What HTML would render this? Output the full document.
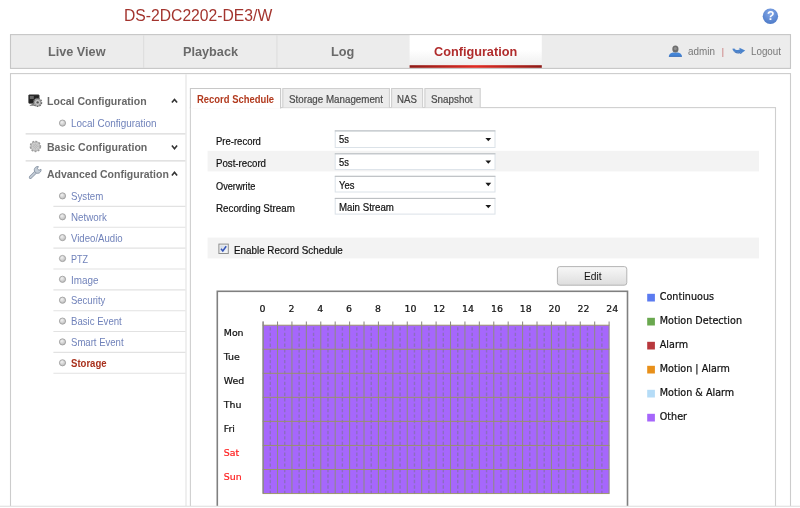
<!DOCTYPE html>
<html><head><meta charset="utf-8">
<title>Configuration</title>
<style>
*{box-sizing:border-box;margin:0;padding:0}
html,body{width:800px;height:508px;overflow:hidden;background:#fff;font-family:"Liberation Sans",Arial,sans-serif;}
.abs{position:absolute}
svg{position:absolute;overflow:visible}
.t{position:absolute;white-space:nowrap;transform-origin:0 0;line-height:14px}
</style></head><body style="filter:blur(0.4px)">

<svg style="left:0;top:0" width="800" height="508" viewBox="0 0 800 508">
<defs>
<linearGradient id="gcur" x1="0" y1="0" x2="0" y2="1"><stop offset="0.45" stop-color="#fff"/><stop offset="1" stop-color="#ededed"/></linearGradient>
<linearGradient id="gred" x1="0" y1="0" x2="1" y2="0"><stop offset="0" stop-color="#8e1a16"/><stop offset="0.5" stop-color="#e02a22"/><stop offset="1" stop-color="#8e1a16"/></linearGradient>
<radialGradient id="ghelp" cx="0.5" cy="0.3" r="0.75"><stop offset="0" stop-color="#84a8e8"/><stop offset="1" stop-color="#4a78c6"/></radialGradient>
<linearGradient id="gbtn" x1="0" y1="0" x2="0" y2="1"><stop offset="0" stop-color="#f8f8f8"/><stop offset="1" stop-color="#dddddd"/></linearGradient>
<radialGradient id="gdot" cx="0.4" cy="0.35" r="0.7"><stop offset="0" stop-color="#f2f2f2"/><stop offset="1" stop-color="#b8b8b8"/></radialGradient>
<linearGradient id="cbg" x1="0" y1="0" x2="1" y2="1"><stop offset="0" stop-color="#cfd8e4"/><stop offset="1" stop-color="#f4f7fa"/></linearGradient>
</defs>
<circle cx="770.4" cy="16.2" r="7.7" fill="url(#ghelp)"/>
<rect x="10.5" y="34.6" width="780" height="33.8" fill="#ececec" stroke="#c6c6c6" stroke-width="1.1"/>
<path d="M143.7 35.2V67.8M276.9 35.2V67.8" stroke="#dcdcdc" stroke-width="1"/>
<rect x="409.6" y="35.2" width="132.2" height="32.6" fill="url(#gcur)"/>
<rect x="409.6" y="65.2" width="132.2" height="2.6" fill="url(#gred)"/>
<rect x="10.5" y="73.6" width="780" height="445" fill="#fff" stroke="#cccccc" stroke-width="1.1"/>
<path d="M25.6 133.9H185.6M25.6 160.9H185.6" stroke="#d9d9d9" stroke-width="1.2"/>
<path d="M53.4 206.40H185.6M53.4 227.26H185.6M53.4 248.12H185.6M53.4 268.98H185.6M53.4 289.84H185.6M53.4 310.70H185.6M53.4 331.56H185.6M53.4 352.42H185.6M53.4 373.28H185.6" stroke="#e2e2e2" stroke-width="1.1"/>
<path d="M186 74.2V520" stroke="#e4e4e4" stroke-width="1.2"/>
<rect x="190.4" y="107.6" width="585.1" height="420" fill="#fff" stroke="#cfcfcf" stroke-width="1.1"/>
<path d="M190.4 108.4V88.5H280.6V108.4" fill="#fff" stroke="#c8c8c8" stroke-width="1.1"/>
<path d="M282.8 107.6V88.5H389.4V107.6" fill="#ececec" stroke="#cfcfcf" stroke-width="1.1"/>
<path d="M391.6 107.6V88.5H422.6V107.6" fill="#ececec" stroke="#cfcfcf" stroke-width="1.1"/>
<path d="M424.9 107.6V88.5H480.2V107.6" fill="#ececec" stroke="#cfcfcf" stroke-width="1.1"/>
<rect x="207.6" y="150.8" width="551.4" height="20.6" fill="#f3f3f3"/>
<rect x="207.6" y="237.6" width="551.4" height="20.8" fill="#f3f3f3"/>
<rect x="335.2" y="130.9" width="159.8" height="16.6" fill="#fff" stroke="#dbe2e8" stroke-width="1"/>
<path d="M334.8 130.9H495.4" stroke="#b9bcbf" stroke-width="1"/>
<path d="M485.4 137.9H491.2L488.3 141.2Z" fill="#1a1a1a"/>
<rect x="335.2" y="153.8" width="159.8" height="15.8" fill="#fff" stroke="#dbe2e8" stroke-width="1"/>
<path d="M334.8 153.8H495.4" stroke="#b9bcbf" stroke-width="1"/>
<path d="M485.4 160.4H491.2L488.3 163.7Z" fill="#1a1a1a"/>
<rect x="335.2" y="176.3" width="159.8" height="15.7" fill="#fff" stroke="#dbe2e8" stroke-width="1"/>
<path d="M334.8 176.3H495.4" stroke="#b9bcbf" stroke-width="1"/>
<path d="M485.4 182.8H491.2L488.3 186.2Z" fill="#1a1a1a"/>
<rect x="335.2" y="198.4" width="159.8" height="15.7" fill="#fff" stroke="#dbe2e8" stroke-width="1"/>
<path d="M334.8 198.4H495.4" stroke="#b9bcbf" stroke-width="1"/>
<path d="M485.4 204.9H491.2L488.3 208.2Z" fill="#1a1a1a"/>
<rect x="557.4" y="266.6" width="69.4" height="18.6" rx="2.5" fill="url(#gbtn)" stroke="#b4b4b4" stroke-width="1"/>
<rect x="218.9" y="244.1" width="9.4" height="9.4" fill="#f4f4f4" stroke="#8e8f8f" stroke-width="1"/>
<rect x="220.3" y="245.5" width="6.6" height="6.6" fill="url(#cbg)"/>
<path d="M221 248.8L222.8 251L226.2 246.2" fill="none" stroke="#3554b8" stroke-width="1.5"/>
<circle cx="62.5" cy="123.1" r="3.1" fill="url(#gdot)" stroke="#999" stroke-width="0.8"/>
<circle cx="62.5" cy="195.9" r="3.1" fill="url(#gdot)" stroke="#999" stroke-width="0.8"/>
<circle cx="62.5" cy="216.8" r="3.1" fill="url(#gdot)" stroke="#999" stroke-width="0.8"/>
<circle cx="62.5" cy="237.6" r="3.1" fill="url(#gdot)" stroke="#999" stroke-width="0.8"/>
<circle cx="62.5" cy="258.5" r="3.1" fill="url(#gdot)" stroke="#999" stroke-width="0.8"/>
<circle cx="62.5" cy="279.3" r="3.1" fill="url(#gdot)" stroke="#999" stroke-width="0.8"/>
<circle cx="62.5" cy="300.2" r="3.1" fill="url(#gdot)" stroke="#999" stroke-width="0.8"/>
<circle cx="62.5" cy="321.1" r="3.1" fill="url(#gdot)" stroke="#999" stroke-width="0.8"/>
<circle cx="62.5" cy="341.9" r="3.1" fill="url(#gdot)" stroke="#999" stroke-width="0.8"/>
<circle cx="62.5" cy="362.8" r="3.1" fill="url(#gdot)" stroke="#999" stroke-width="0.8"/>
<path d="M171.9 102.6L174.5 99.39999999999999L177.1 102.6" fill="none" stroke="#333" stroke-width="1.6"/>
<path d="M171.9 145.6L174.5 148.79999999999998L177.1 145.6" fill="none" stroke="#333" stroke-width="1.6"/>
<path d="M171.9 175.4L174.5 172.2L177.1 175.4" fill="none" stroke="#333" stroke-width="1.6"/>
<rect x="217.3" y="291.3" width="410.2" height="230" fill="#fff" stroke="#808080" stroke-width="1.6"/>
<rect x="263.1" y="325.2" width="346.0" height="168.3" fill="#a667fc"/>
<path d="M270.31 327.2V493.5M284.73 327.2V493.5M299.14 327.2V493.5M313.56 327.2V493.5M327.98 327.2V493.5M342.39 327.2V493.5M356.81 327.2V493.5M371.23 327.2V493.5M385.64 327.2V493.5M400.06 327.2V493.5M414.48 327.2V493.5M428.89 327.2V493.5M443.31 327.2V493.5M457.73 327.2V493.5M472.14 327.2V493.5M486.56 327.2V493.5M500.98 327.2V493.5M515.39 327.2V493.5M529.81 327.2V493.5M544.23 327.2V493.5M558.64 327.2V493.5M573.06 327.2V493.5M587.48 327.2V493.5M601.89 327.2V493.5" stroke="#8c6ec0" stroke-width="1.4" stroke-dasharray="3.4 2.05" fill="none"/>
<path d="M263.10 321.6V493.5M277.52 321.6V493.5M291.93 321.6V493.5M306.35 321.6V493.5M320.77 321.6V493.5M335.18 321.6V493.5M349.60 321.6V493.5M364.02 321.6V493.5M378.43 321.6V493.5M392.85 321.6V493.5M407.27 321.6V493.5M421.68 321.6V493.5M436.10 321.6V493.5M450.52 321.6V493.5M464.93 321.6V493.5M479.35 321.6V493.5M493.77 321.6V493.5M508.18 321.6V493.5M522.60 321.6V493.5M537.02 321.6V493.5M551.43 321.6V493.5M565.85 321.6V493.5M580.27 321.6V493.5M594.68 321.6V493.5M609.10 321.6V493.5" stroke="#8e8a84" stroke-width="1.05" fill="none"/>
<path d="M262.7 325.20H609.5M262.7 349.25H609.5M262.7 373.30H609.5M262.7 397.35H609.5M262.7 421.40H609.5M262.7 445.45H609.5M262.7 469.50H609.5M262.7 493.55H609.5" stroke="#98945f" stroke-width="0.9" fill="none"/>
<path d="M263.1 321.6V493.5" stroke="#858585" stroke-width="1.1" fill="none"/>
<g font-family="DejaVu Sans, Verdana, sans-serif" font-size="9.4" fill="#111" stroke="#111" stroke-width="0.22">
<text x="259.6" y="312.4">0</text>
<text x="288.4" y="312.4">2</text>
<text x="317.3" y="312.4">4</text>
<text x="346.1" y="312.4">6</text>
<text x="374.9" y="312.4">8</text>
<text x="404.5" y="312.4">10</text>
<text x="433.3" y="312.4">12</text>
<text x="462.1" y="312.4">14</text>
<text x="491.0" y="312.4">16</text>
<text x="519.8" y="312.4">18</text>
<text x="548.6" y="312.4">20</text>
<text x="577.5" y="312.4">22</text>
<text x="606.3" y="312.4">24</text>
<text x="223.8" y="335.9">Mon</text>
<text x="223.8" y="359.9">Tue</text>
<text x="223.8" y="384.0">Wed</text>
<text x="223.8" y="408.0">Thu</text>
<text x="223.8" y="432.1">Fri</text>
<text x="223.8" y="456.1" fill="#f22" stroke="#f22">Sat</text>
<text x="223.8" y="480.2" fill="#f22" stroke="#f22">Sun</text>
</g>
<g font-family="DejaVu Sans, Verdana, sans-serif" font-size="9.6" fill="#111" stroke="#111" stroke-width="0.22">
<rect x="647.2" y="293.8" width="7.7" height="7.7" fill="#5b7bf0" stroke="none"/><text x="659.8" y="299.8">Continuous</text>
<rect x="647.2" y="317.8" width="7.7" height="7.7" fill="#6aa84f" stroke="none"/><text x="659.8" y="323.8">Motion Detection</text>
<rect x="647.2" y="341.8" width="7.7" height="7.7" fill="#b8383d" stroke="none"/><text x="659.8" y="347.8">Alarm</text>
<rect x="647.2" y="365.8" width="7.7" height="7.7" fill="#e8901a" stroke="none"/><text x="659.8" y="371.8">Motion | Alarm</text>
<rect x="647.2" y="389.8" width="7.7" height="7.7" fill="#b5dcf7" stroke="none"/><text x="659.8" y="395.8">Motion &amp; Alarm</text>
<rect x="647.2" y="413.8" width="7.7" height="7.7" fill="#a666fb" stroke="none"/><text x="659.8" y="419.8">Other</text>
</g>
<rect x="0" y="506" width="800" height="3" fill="#fff"/><path d="M0 506.3H800" stroke="#dcdcdc" stroke-width="1.1"/>
</svg>

<svg id="ic_user" style="left:668px;top:44px" width="15" height="14" viewBox="0 0 15 14">
<path d="M0.9 12.6 C0.9 9.8 2.6 8.7 5 8.4 L9.8 8.4 C12.2 8.7 13.9 9.8 13.9 12.6 Z" fill="#4585d6"/>
<path d="M0.9 12.3 H13.9" stroke="#2c63b2" stroke-width="0.9"/>
<ellipse cx="7.4" cy="4.9" rx="3.1" ry="3.5" fill="#6e6e6e"/>
<ellipse cx="7.3" cy="4.6" rx="1.5" ry="1.7" fill="#8f8f8f"/>
</svg>
<svg id="ic_logout" style="left:732px;top:47px" width="14" height="9" viewBox="0 0 14 9">
<path d="M0.3 1.8 L2.4 1.4 C3.2 2.8 5 3.2 7.6 2.8 L7.4 0.7 L13.2 3.4 L8.4 7 L8.1 5 C4.5 5.9 1.2 5.2 0.3 1.8Z" fill="#4b83cc"/>
<path d="M0.3 1.8 C1.2 5.2 4.5 5.9 8.1 5 L8.4 7 L10 5.8 C6 7.4 1.4 6.4 0.3 1.8Z" fill="#3a6eb8"/>
</svg>
<svg id="ic_local" style="left:28px;top:93.5px" width="15" height="14" viewBox="0 0 15 14">
<rect x="0.6" y="0.8" width="10.6" height="8.6" rx="0.8" fill="#222" stroke="#555" stroke-width="0.6"/>
<rect x="1.8" y="2" width="4" height="3" fill="#666"/>
<rect x="3.4" y="9.4" width="4.6" height="1.6" fill="#777"/>
<rect x="1.8" y="10.8" width="7.6" height="1.2" fill="#999"/>
<circle cx="9.6" cy="8.4" r="4" fill="#bdbdbd" stroke="#6a6a6a" stroke-width="1.3" stroke-dasharray="1.6 1.1"/>
<circle cx="9.6" cy="8.4" r="3.1" fill="#c9c9c9" stroke="#777" stroke-width="0.6"/>
<circle cx="9.6" cy="8.4" r="1.2" fill="#555"/>
</svg>
<svg id="ic_basic" style="left:29px;top:140.3px" width="13" height="13" viewBox="0 0 13 13">
<circle cx="6.4" cy="6.4" r="4.9" fill="#c6c6c6" stroke="#9c9c9c" stroke-width="1.7" stroke-dasharray="2.0 1.2"/>
<circle cx="6.4" cy="6.4" r="4.1" fill="#cfcfcf" stroke="#adadad" stroke-width="0.6"/>
<circle cx="6.4" cy="6.4" r="1.6" fill="#f2f2f2" stroke="#a5a5a5" stroke-width="0.7"/>
<path d="M6.4 2.4V10.4M2.4 6.4H10.4M3.6 3.6L9.2 9.2M9.2 3.6L3.6 9.2" stroke="#b4b4b4" stroke-width="0.5"/>
</svg>
<svg id="ic_adv" style="left:27.6px;top:165px" width="15" height="15" viewBox="0 0 15 15">
<path d="M2.4 12.4 L8.2 6.6" stroke="#8793a3" stroke-width="3.1" stroke-linecap="round"/>
<path d="M2.4 12.4 L8.2 6.6" stroke="#c3ccd6" stroke-width="1.7" stroke-linecap="round"/>
<path d="M13 4.2 A3.4 3.4 0 1 1 10.4 1.6 L9.3 3.7 L11 5.3 Z" fill="#c3ccd6" stroke="#8793a3" stroke-width="0.9" stroke-linejoin="round"/>
</svg>

<div class="t" id="title" style="left:124.3px;top:9.23px;font-size:15.8px;color:#a3342e;transform:scaleX(0.9930)">DS-2DC2202-DE3/W</div>
<div class="t" id="help" style="left:766.9px;top:9.47px;font-size:12.2px;color:#fff;font-weight:bold">?</div>
<div class="t" id="n1" style="left:48.2px;top:45.13px;font-size:13.2px;color:#6a6a6a;font-weight:bold;transform:scaleX(0.9603)">Live View</div>
<div class="t" id="n2" style="left:182.5px;top:45.13px;font-size:13.2px;color:#6a6a6a;font-weight:bold;transform:scaleX(0.9617)">Playback</div>
<div class="t" id="n3" style="left:331.0px;top:45.13px;font-size:13.2px;color:#6a6a6a;font-weight:bold;transform:scaleX(0.9639)">Log</div>
<div class="t" id="n4" style="left:433.6px;top:45.13px;font-size:13.2px;color:#b02c2c;font-weight:bold;transform:scaleX(0.9625)">Configuration</div>
<div class="t" id="u_admin" style="left:687.8px;top:44.75px;font-size:10.1px;color:#777;transform:scaleX(0.9782)">admin</div>
<div class="t" id="u_bar" style="left:721.8px;top:44.62px;font-size:8.6px;color:#c56a6a">|</div>
<div class="t" id="u_logout" style="left:750.9px;top:44.75px;font-size:10.1px;color:#777;transform:scaleX(0.9717)">Logout</div>
<div class="t" id="mh1" style="left:46.9px;top:94.36px;font-size:10.5px;color:#686868;font-weight:bold;transform:scaleX(1.0043)">Local Configuration</div>
<div class="t" id="mh2" style="left:46.9px;top:140.36px;font-size:10.5px;color:#686868;font-weight:bold;transform:scaleX(1.0054)">Basic Configuration</div>
<div class="t" id="mh3" style="left:46.9px;top:167.36px;font-size:10.5px;color:#686868;font-weight:bold">Advanced Configuration</div>
<div class="t" id="mi0" style="left:71.3px;top:117.47px;font-size:10.2px;color:#7082ba;transform:scaleX(0.9738)">Local Configuration</div>
<div class="t" id="mi1" style="left:70.8px;top:189.46px;font-size:10.5px;color:#7082ba;transform:scaleX(0.9224)">System</div>
<div class="t" id="mi2" style="left:70.8px;top:210.32px;font-size:10.5px;color:#7082ba;transform:scaleX(0.9295)">Network</div>
<div class="t" id="mi3" style="left:70.8px;top:231.18px;font-size:10.5px;color:#7082ba;transform:scaleX(0.9143)">Video/Audio</div>
<div class="t" id="mi4" style="left:70.8px;top:252.04px;font-size:10.5px;color:#7082ba;transform:scaleX(0.8617)">PTZ</div>
<div class="t" id="mi5" style="left:70.8px;top:272.90px;font-size:10.5px;color:#7082ba;transform:scaleX(0.9422)">Image</div>
<div class="t" id="mi6" style="left:70.8px;top:292.76px;font-size:10.5px;color:#7082ba;transform:scaleX(0.9041)">Security</div>
<div class="t" id="mi7" style="left:70.8px;top:313.62px;font-size:10.5px;color:#7082ba;transform:scaleX(0.9161)">Basic Event</div>
<div class="t" id="mi8" style="left:70.8px;top:335.48px;font-size:10.5px;color:#7082ba;transform:scaleX(0.9103)">Smart Event</div>
<div class="t" id="mi9" style="left:70.8px;top:356.34px;font-size:10.5px;color:#a8301c;font-weight:bold;transform:scaleX(0.9106)">Storage</div>
<div class="t" id="tb1" style="left:196.9px;top:92.53px;font-size:10.0px;color:#b23a1e;font-weight:bold;transform:scaleX(0.9437)">Record Schedule</div>
<div class="t" id="tb2" style="left:289.1px;top:93.33px;font-size:10.0px;color:#4a4a4a;transform:scaleX(0.9774);-webkit-text-stroke:0.2px #4a4a4a">Storage Management</div>
<div class="t" id="tb3" style="left:397.2px;top:93.33px;font-size:10.0px;color:#4a4a4a;transform:scaleX(0.9629);-webkit-text-stroke:0.2px #4a4a4a">NAS</div>
<div class="t" id="tb4" style="left:431px;top:93.33px;font-size:10.0px;color:#4a4a4a;transform:scaleX(0.9843);-webkit-text-stroke:0.2px #4a4a4a">Snapshot</div>
<div class="t" id="lb0" style="left:215.9px;top:135.13px;font-size:10.0px;color:#111;transform:scaleX(0.9503);-webkit-text-stroke:0.2px #111">Pre-record</div>
<div class="t" id="lb1" style="left:215.9px;top:157.23px;font-size:10.0px;color:#111;transform:scaleX(0.9674);-webkit-text-stroke:0.2px #111">Post-record</div>
<div class="t" id="lb2" style="left:215.9px;top:180.03px;font-size:10.0px;color:#111;transform:scaleX(0.9183);-webkit-text-stroke:0.2px #111">Overwrite</div>
<div class="t" id="lb3" style="left:215.9px;top:202.44px;font-size:10.0px;color:#111;transform:scaleX(0.9790);-webkit-text-stroke:0.2px #111">Recording Stream</div>
<div class="t" id="sv0" style="left:339.1px;top:132.73px;font-size:10.0px;color:#111;transform:scaleX(0.9373);-webkit-text-stroke:0.2px #111">5s</div>
<div class="t" id="sv1" style="left:339.1px;top:155.63px;font-size:10.0px;color:#111;transform:scaleX(0.9373);-webkit-text-stroke:0.2px #111">5s</div>
<div class="t" id="sv2" style="left:339.1px;top:179.13px;font-size:10.0px;color:#111;transform:scaleX(0.9432);-webkit-text-stroke:0.2px #111">Yes</div>
<div class="t" id="sv3" style="left:339.1px;top:201.23px;font-size:10.0px;color:#111;transform:scaleX(0.9685);-webkit-text-stroke:0.2px #111">Main Stream</div>
<div class="t" id="l_enable" style="left:233.6px;top:244.10px;font-size:10.1px;color:#111;transform:scaleX(0.9743);-webkit-text-stroke:0.2px #111">Enable Record Schedule</div>
<div class="t" id="edit" style="left:583.5px;top:269.06px;font-size:10.5px;color:#111;transform:scaleX(0.9782)">Edit</div>
</body></html>
